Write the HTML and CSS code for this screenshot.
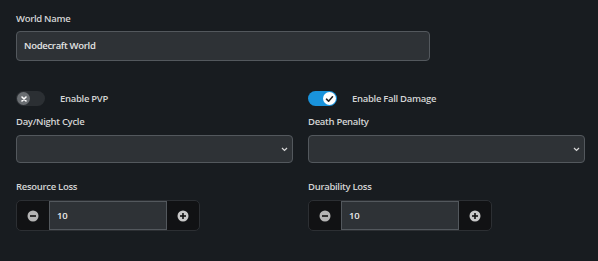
FILE: index.html
```html
<!DOCTYPE html>
<html>
<head>
<meta charset="utf-8">
<link rel="stylesheet" href="styles.css">
</head>
<body>
<div class="page">
  <div class="field-label first">World Name</div>
  <div class="text-input">Nodecraft World</div>

  <div class="grid">
    <div class="col">
      <div class="toggle-row">
        <div class="toggle off"><span class="knob"><svg width="8" height="8" viewBox="0 0 8 8"><path d="M2 2L6 6M6 2L2 6" stroke="#fff" stroke-width="1.6" stroke-linecap="round"/></svg></span></div>
        <span class="toggle-text">Enable PVP</span>
      </div>
      <div class="field-label">Day/Night Cycle</div>
      <div class="select"><svg class="chev" width="7" height="5" viewBox="0 0 7 5"><path d="M1 1L3.5 3.5L6 1" stroke="#d8d8d8" stroke-width="1.2" fill="none"/></svg></div>
      <div class="field-label lower">Resource Loss</div>
      <div class="stepper">
        <div class="step-btn"><svg width="12" height="12" viewBox="0 0 12 12"><circle cx="6" cy="6" r="5.5" fill="#b4b4b4"/><rect x="3" y="5.2" width="6" height="1.6" fill="#111"/></svg></div>
        <div class="step-value">10</div>
        <div class="step-btn"><svg width="12" height="12" viewBox="0 0 12 12"><circle cx="6" cy="6" r="5.5" fill="#c8c8c8"/><rect x="3" y="5.2" width="6" height="1.6" fill="#111"/><rect x="5.2" y="3" width="1.6" height="6" fill="#111"/></svg></div>
      </div>
    </div>
    <div class="col">
      <div class="toggle-row">
        <div class="toggle on"><span class="knob"><svg width="9" height="8" viewBox="0 0 9 8"><path d="M1.5 4.2L3.6 6.2L7.5 1.8" stroke="#222" stroke-width="1.6" fill="none" stroke-linecap="round" stroke-linejoin="round"/></svg></span></div>
        <span class="toggle-text">Enable Fall Damage</span>
      </div>
      <div class="field-label">Death Penalty</div>
      <div class="select"><svg class="chev" width="7" height="5" viewBox="0 0 7 5"><path d="M1 1L3.5 3.5L6 1" stroke="#d8d8d8" stroke-width="1.2" fill="none"/></svg></div>
      <div class="field-label lower">Durability Loss</div>
      <div class="stepper">
        <div class="step-btn"><svg width="12" height="12" viewBox="0 0 12 12"><circle cx="6" cy="6" r="5.5" fill="#b4b4b4"/><rect x="3" y="5.2" width="6" height="1.6" fill="#111"/></svg></div>
        <div class="step-value">10</div>
        <div class="step-btn"><svg width="12" height="12" viewBox="0 0 12 12"><circle cx="6" cy="6" r="5.5" fill="#c8c8c8"/><rect x="3" y="5.2" width="6" height="1.6" fill="#111"/><rect x="5.2" y="3" width="1.6" height="6" fill="#111"/></svg></div>
      </div>
    </div>
  </div>
</div>
</body>
</html>
```
FILE: styles.css
```css
html, body {
  margin: 0;
  padding: 0;
  background: #181c20;
  height: 100%;
}
.page {
  padding: 13px 13px 0 16px;
  font-family: "Open Sans", "Noto Sans", sans-serif;
  font-size: 9.5px;
  font-weight: 600;
  letter-spacing: -0.3px;
  color: #d4d4d4;
}
.field-label {
  height: 12px;
  line-height: 12px;
  margin-top: 10px;
  margin-bottom: 7px;
}
.field-label.first {
  margin-top: 0;
  margin-bottom: 6px;
}
.field-label.lower {
  margin-top: 18px;
}
.text-input {
  box-sizing: border-box;
  width: 414px;
  height: 30px;
  background: #2e3236;
  border: 1px solid #53585d;
  border-radius: 4px;
  padding-left: 7px;
  line-height: 28px;
  color: #e4e4e4;
}
.grid {
  display: grid;
  grid-template-columns: 277px 277px;
  column-gap: 15px;
  margin-top: 30px;
}
.col {
  display: flex;
  flex-direction: column;
}
.toggle-row {
  display: flex;
  align-items: center;
  height: 15px;
}
.toggle {
  box-sizing: border-box;
  width: 29px;
  height: 15px;
  border-radius: 8px;
  display: flex;
  align-items: center;
  padding: 1px;
}
.toggle.off {
  background: #2b2f33;
}
.toggle.on {
  background: #1993dc;
  justify-content: flex-end;
}
.knob {
  width: 13px;
  height: 13px;
  border-radius: 50%;
  display: flex;
  align-items: center;
  justify-content: center;
}
.toggle.off .knob {
  background: #6a6e72;
}
.toggle.on .knob {
  background: #ffffff;
}
.toggle-text {
  margin-left: 15px;
}
.select {
  box-sizing: border-box;
  height: 28px;
  background: #2e3236;
  border: 1px solid #53585d;
  border-radius: 4px;
  display: flex;
  align-items: center;
  justify-content: flex-end;
  padding-right: 4px;
}
.chev {
  display: block;
}
.stepper {
  box-sizing: border-box;
  width: 184px;
  height: 31px;
  display: flex;
  border: 1px solid #2c2f33;
  border-radius: 5px;
  background: #111214;
  overflow: hidden;
}
.step-btn {
  width: 32px;
  display: flex;
  align-items: center;
  justify-content: center;
}
.step-value {
  box-sizing: border-box;
  flex: 1;
  background: #2e3236;
  border: 1px solid #53585d;
  padding-left: 7px;
  line-height: 27px;
  color: #ececec;
}
```
